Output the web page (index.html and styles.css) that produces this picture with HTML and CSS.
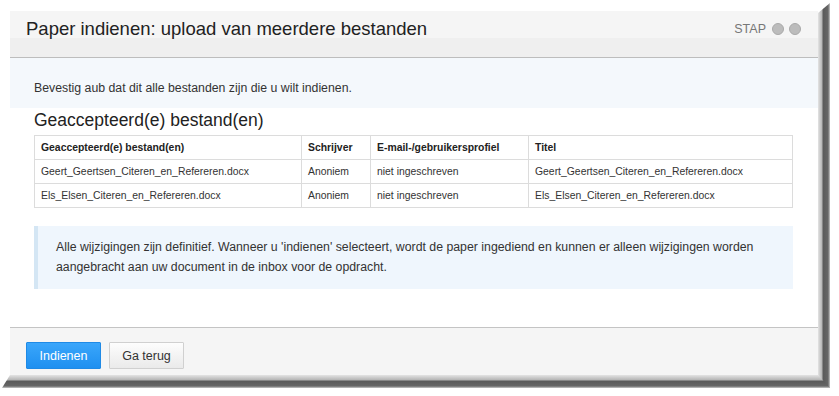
FILE: index.html
```html
<!DOCTYPE html>
<html lang="nl">
<head>
  <meta charset="UTF-8" />
  <title>Paper indienen</title>
  <link rel="stylesheet" href="styles.css">
</head>
<body>

<div class="panel">
  <div class="panel-header">
    <h1>Paper indienen: upload van meerdere bestanden</h1>
    <div class="steps">
      <span>STAP</span>
      <span class="dot"></span>
      <span class="dot"></span>
    </div>
  </div>

  <div class="intro">Bevestig aub dat dit alle bestanden zijn die u wilt indienen.</div>

  <div class="content">
    <h2>Geaccepteerd(e) bestand(en)</h2>
    <table class="files">
      <tr>
        <th class="c-file">Geaccepteerd(e) bestand(en)</th>
        <th class="c-author">Schrijver</th>
        <th class="c-mail">E-mail-/gebruikersprofiel</th>
        <th>Titel</th>
      </tr>
      <tr>
        <td>Geert_Geertsen_Citeren_en_Refereren.docx</td>
        <td>Anoniem</td>
        <td>niet ingeschreven</td>
        <td>Geert_Geertsen_Citeren_en_Refereren.docx</td>
      </tr>
      <tr>
        <td>Els_Elsen_Citeren_en_Refereren.docx</td>
        <td>Anoniem</td>
        <td>niet ingeschreven</td>
        <td>Els_Elsen_Citeren_en_Refereren.docx</td>
      </tr>
    </table>

    <div class="notice">
      Alle wijzigingen zijn definitief. Wanneer u 'indienen' selecteert, wordt de paper ingediend en kunnen er alleen wijzigingen worden aangebracht aan uw document in de inbox voor de opdracht.
    </div>
  </div>

  <div class="panel-footer">
    <button class="btn btn-primary">Indienen</button>
    <button class="btn">Ga terug</button>
  </div>

  <div class="shadow-right"></div>
  <div class="shadow-bottom"></div>
</div>

</body>
</html>
```

FILE: styles.css
```css
html {
  background: #fff;
}
body {
  margin: 0;
  min-height: 396px;
  padding-top: 11px;
  box-sizing: border-box;
  font-family: "Liberation Sans", Arial, sans-serif;
  color: #333;
}
.panel {
  position: relative;
  margin-left: 10px;
  width: 808px;
  height: 364px;
  display: flex;
  flex-direction: column;
  background: #fff;
}
/* schaduw rechts en onder */
.shadow-right {
  position: absolute;
  left: 808px;
  top: -8px;
  width: 12px;
  height: 385px;
  background: linear-gradient(to right, #e4e4e4 0, #b4b4b4 4px, #5a5a5a 5px, #666 10px, #c8c8c8 12px);
  clip-path: polygon(0 10px, 12px 0, 12px 385px, 0 385px);
}
.shadow-bottom {
  position: absolute;
  top: 364px;
  left: -8px;
  width: 828px;
  height: 13px;
  background: linear-gradient(to bottom, #e4e4e4 0, #b4b4b4 5px, #5a5a5a 6px, #666 11px, #c8c8c8 13px);
  clip-path: polygon(8px 0, 816px 0, 828px 13px, 0 13px);
}
.panel-header {
  height: 46px;
  display: flex;
  align-items: flex-start;
  justify-content: space-between;
  padding: 0 16px;
  background: linear-gradient(to bottom, #f5f5f5 0, #f5f5f5 27px, #efefef 27px);
  border-bottom: 1px solid #bdbdbd;
}
h1 {
  margin: 7px 0 0;
  font-size: 18.5px;
  font-weight: normal;
  color: #222;
}
.steps {
  display: flex;
  align-items: center;
  gap: 5px;
  margin-top: 11px;
  margin-right: 1px;
  font-size: 12.5px;
  color: #777;
}
.steps span:first-child {
  margin-right: 1px;
}
.dot {
  width: 10px;
  height: 10px;
  border-radius: 50%;
  background: #bcbcbc;
  border: 1px solid #aaa;
}
.intro {
  height: 50px;
  padding: 10px 24px 0;
  display: flex;
  align-items: center;
  box-sizing: border-box;
  background: #f4f8fc;
  font-size: 12.3px;
}
.content {
  flex: 1;
  padding: 0 24px;
}
h2 {
  margin: 2px 0 4px;
  font-size: 17.5px;
  font-weight: normal;
  color: #222;
}
.files {
  width: 759px;
  border-collapse: collapse;
  font-size: 10.4px;
  color: #333;
}
.files th,
.files td {
  border: 1px solid #dcdcdc;
  text-align: left;
  padding: 0 6px;
  height: 23px;
}
.files th {
  color: #222;
}
.c-file { width: 254px; }
.c-author { width: 56px; }
.c-mail { width: 145px; }
.notice {
  margin-top: 18px;
  width: 759px;
  box-sizing: border-box;
  padding: 11px 20px 12px 18px;
  background: #eff6fd;
  border-left: 4px solid #d4e6f4;
  font-size: 12.3px;
  line-height: 20px;
}
.panel-footer {
  border-top: 1px solid #c4c4c4;
  background: #f5f5f5;
  display: flex;
  align-items: flex-start;
  gap: 8px;
  padding: 14px 16px 0;
  box-sizing: border-box;
  height: 48px;
}
.btn {
  height: 27px;
  width: 75px;
  font-family: "Liberation Sans", Arial, sans-serif;
  font-size: 12.5px;
  color: #333;
  border: 1px solid #d0d0d0;
  background: linear-gradient(to bottom, #fdfdfd, #eaeaea);
  border-radius: 1px;
  padding: 0;
}
.btn-primary {
  color: #fff;
  border-color: #1f8ae6;
  background: linear-gradient(to bottom, #3aa6fb, #1f90f0);
}
```
